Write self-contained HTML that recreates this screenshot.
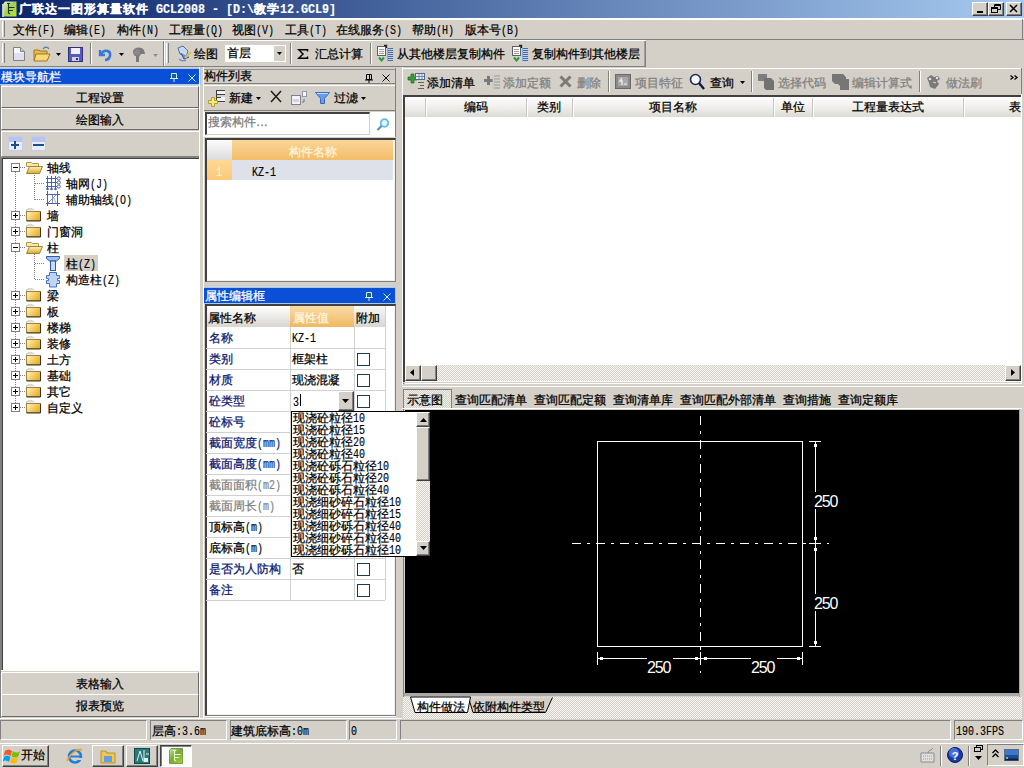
<!DOCTYPE html>
<html><head><meta charset="utf-8">
<style>
*{box-sizing:border-box;margin:0;padding:0}
html,body{width:1024px;height:768px;overflow:hidden;background:#D4D0C8;font-family:"Liberation Sans",sans-serif;font-size:12px;color:#000;position:relative}
.a{position:absolute}
.t{position:absolute;white-space:nowrap;font-size:12px;line-height:14px;height:14px;-webkit-text-stroke:0.25px currentColor}
.mw{display:inline-block;overflow:visible;white-space:nowrap}
.m{display:inline-block;font-family:"Liberation Mono",monospace;transform-origin:0 0;-webkit-text-stroke:0.15px currentColor;letter-spacing:0}
.rz{border-top:1px solid #fff;border-left:1px solid #fff;border-right:1px solid #808080;border-bottom:1px solid #808080}
.rz2{border-top:1px solid #fff;border-left:1px solid #fff;border-right:1px solid #404040;border-bottom:1px solid #404040;box-shadow:inset -1px -1px 0 #808080}
.sk{border-top:1px solid #808080;border-left:1px solid #808080;border-right:1px solid #fff;border-bottom:1px solid #fff}
.vsep{position:absolute;width:2px;border-left:1px solid #808080;border-right:1px solid #fff}
.hsep{position:absolute;height:2px;border-top:1px solid #808080;border-bottom:1px solid #fff}
.grip{position:absolute;width:3px;border-left:1px solid #fff;border-right:1px solid #808080}
.dots{background-color:#D4D0C8;background-image:repeating-conic-gradient(#D4D0C8 0 25%,#F4F3F0 0 50%);background-size:2px 2px}
.g{color:#808080}
.nv{color:#0A246A}
.wh{color:#fff}
svg{position:absolute;overflow:visible}
</style></head><body>

<div class="a" style="left:0px;top:0px;width:1024px;height:18px;background:linear-gradient(to right,#0A246A 0%,#A6CAF0 100%)"></div>
<svg style="left:2px;top:1px" width="16" height="16" viewBox="0 0 16 16"><defs><linearGradient id="gi" x1="0" y1="0" x2="1" y2="1"><stop offset="0" stop-color="#E0F4C0"/><stop offset="0.45" stop-color="#A8CC60"/><stop offset="1" stop-color="#B0E828"/></linearGradient></defs><path d="M3 0.5h11.5v15h-13v-13z" fill="url(#gi)"/><path d="M1 3v13" stroke="#F0FFE0" stroke-width="1.5"/><path d="M5 2.5h3M6.5 2.5v9M6.5 6.5h6M7 9.5h4M6 11.5l2 1.5" stroke="#1E3A0A" stroke-width="1.1" fill="none"/></svg>
<div class="t" style="left:19px;top:2px;color:#fff;font-weight:bold;letter-spacing:1px;">广联达一图形算量软件</div>
<div class="t" style="left:156px;top:2px;color:#fff;font-weight:bold;"><span class="mw" style="width:98px"><span class="m" style="font-size:12.5px;transform:scaleX(0.9333)">GCL2008&nbsp;-&nbsp;[D:\</span></span></div>
<div class="t" style="left:254px;top:2px;color:#fff;font-weight:bold;letter-spacing:1px;">教学</div>
<div class="t" style="left:280px;top:2px;color:#fff;font-weight:bold;"><span class="mw" style="width:56px"><span class="m" style="font-size:12.5px;transform:scaleX(0.9333)">12.GCL9]</span></span></div>
<div class="a rz2" style="left:972px;top:2px;width:16px;height:14px;background:#D4D0C8"></div>
<div class="a rz2" style="left:988px;top:2px;width:16px;height:14px;background:#D4D0C8"></div>
<div class="a rz2" style="left:1006px;top:2px;width:16px;height:14px;background:#D4D0C8"></div>
<svg style="left:976px;top:5px" width="10" height="9" viewBox="0 0 10 9"><rect x="1" y="6" width="6" height="2" fill="#000"/></svg>
<svg style="left:991px;top:4px" width="10" height="9" viewBox="0 0 10 9"><path d="M3.5 0.5h6v5h-6z M3 1.5h6" stroke="#000" fill="none"/><rect x="0.5" y="3.5" width="6" height="5" fill="#D4D0C8" stroke="#000"/><path d="M1 4.5h5" stroke="#000"/></svg>
<svg style="left:1009px;top:4px" width="10" height="9" viewBox="0 0 10 9"><path d="M1 1L8 8M8 1L1 8" stroke="#000" stroke-width="1.5"/></svg>
<div class="a" style="left:0px;top:18px;width:1024px;height:1px;background:#fff"></div>
<div class="a" style="left:0px;top:19px;width:1024px;height:1px;background:#fff"></div>
<div class="grip" style="left:2px;top:21px;height:16px"></div>
<div class="a" style="left:0px;top:39px;width:1024px;height:1px;background:#808080"></div>
<div class="a" style="left:1022px;top:19px;width:1px;height:20px;background:#808080"></div>
<div class="t" style="left:13px;top:23px;">文件<span class="mw" style="width:18px"><span class="m" style="font-size:12.5px;transform:scaleX(0.8000)">(F)</span></span></div>
<div class="t" style="left:64px;top:23px;">编辑<span class="mw" style="width:18px"><span class="m" style="font-size:12.5px;transform:scaleX(0.8000)">(E)</span></span></div>
<div class="t" style="left:117px;top:23px;">构件<span class="mw" style="width:18px"><span class="m" style="font-size:12.5px;transform:scaleX(0.8000)">(N)</span></span></div>
<div class="t" style="left:169px;top:23px;">工程量<span class="mw" style="width:18px"><span class="m" style="font-size:12.5px;transform:scaleX(0.8000)">(Q)</span></span></div>
<div class="t" style="left:232px;top:23px;">视图<span class="mw" style="width:18px"><span class="m" style="font-size:12.5px;transform:scaleX(0.8000)">(V)</span></span></div>
<div class="t" style="left:285px;top:23px;">工具<span class="mw" style="width:18px"><span class="m" style="font-size:12.5px;transform:scaleX(0.8000)">(T)</span></span></div>
<div class="t" style="left:336px;top:23px;">在线服务<span class="mw" style="width:18px"><span class="m" style="font-size:12.5px;transform:scaleX(0.8000)">(S)</span></span></div>
<div class="t" style="left:412px;top:23px;">帮助<span class="mw" style="width:18px"><span class="m" style="font-size:12.5px;transform:scaleX(0.8000)">(H)</span></span></div>
<div class="t" style="left:465px;top:23px;">版本号<span class="mw" style="width:18px"><span class="m" style="font-size:12.5px;transform:scaleX(0.8000)">(B)</span></span></div>
<div class="a" style="left:0px;top:40px;width:646px;height:1px;background:#fff"></div>
<div class="a" style="left:0px;top:66px;width:646px;height:1px;background:#808080"></div>
<div class="grip" style="left:2px;top:43px;height:20px"></div>
<div class="a" style="left:163px;top:41px;width:1px;height:25px;background:#808080"></div>
<svg style="left:13px;top:47px" width="12" height="14" viewBox="0 0 12 14"><path d="M0.5 0.5h7l4 4v9h-11z" fill="#F8F8FF" stroke="#808080"/><path d="M7.5 0.5v4h4" fill="#C8C8D8" stroke="#808080"/><rect x="1" y="6" width="10" height="7" fill="#E0E0F0"/></svg>
<svg style="left:33px;top:46px" width="18" height="16" viewBox="0 0 18 16"><path d="M1 4h5l1 1h7v9H1z" fill="#E8B84C" stroke="#A07820"/><path d="M3 8h14l-3 7H1z" fill="#F8D878" stroke="#A07820"/><path d="M10 3c2-3 5-2 6 0" stroke="#5080B0" fill="none" stroke-width="1.3"/></svg>
<svg style="left:56px;top:53px" width="5" height="3" viewBox="0 0 5 3"><path d="M0 0h5l-2.5 3z" fill="#000"/></svg>
<svg style="left:68px;top:47px" width="16" height="15" viewBox="0 0 16 15"><rect x="0.5" y="0.5" width="14" height="14" fill="#5A5AB4" stroke="#303080"/><rect x="3" y="1" width="9" height="6" fill="#F0F0F8"/><rect x="4" y="10" width="7" height="4" fill="#D0D0E0"/><rect x="8" y="11" width="2" height="2" fill="#303080"/></svg>
<div class="vsep" style="left:90px;top:43px;height:21px"></div>
<svg style="left:97px;top:47px" width="15" height="14" viewBox="0 0 15 14"><path d="M3 3v5h5" stroke="#3A78D8" stroke-width="2.4" fill="none"/><path d="M4 7c3-5 10-4 9 2c-1 3-3 4-5 4" stroke="#3A78D8" stroke-width="2.6" fill="none"/></svg>
<svg style="left:119px;top:53px" width="5" height="3" viewBox="0 0 5 3"><path d="M0 0h5l-2.5 3z" fill="#000"/></svg>
<svg style="left:131px;top:46px" width="16" height="16" viewBox="0 0 16 16"><path d="M2 5c1-4 8-5 11-1l1 4h-4l-2 3v5h-3v-6c-2 0-3-2-3-5z" fill="#7A7A7A"/><circle cx="6" cy="6" r="3" fill="#8A8A8A"/></svg>
<svg style="left:153px;top:54px" width="5" height="3" viewBox="0 0 5 3"><path d="M0 0h5l-2.5 3z" fill="#909090"/></svg>
<div class="a" style="left:164px;top:41px;width:1px;height:25px;background:#fff"></div>
<div class="grip" style="left:166px;top:43px;height:20px"></div>
<svg style="left:175px;top:45px" width="17" height="17" viewBox="0 0 17 17"><path d="M3 3l5-2 5 5-2 6-6-3z" fill="#C8D8F0" stroke="#5070B0"/><path d="M6 8l3 6 5-2" fill="#6C8CD0" stroke="#3050A0"/><path d="M10 13l6-6" stroke="#E0C040" stroke-width="2"/><path d="M4 14c2 2 5 2 7 1" stroke="#7090D0" fill="none" stroke-width="1.5"/></svg>
<div class="t" style="left:194px;top:47px;">绘图</div>
<div class="a" style="left:225px;top:45px;width:61px;height:17px;background:#fff"></div>
<div class="t" style="left:227px;top:46px;">首层</div>
<div class="a " style="left:274px;top:46px;width:11px;height:15px;background:#D4D0C8"></div>
<svg style="left:277px;top:52px" width="5" height="3" viewBox="0 0 5 3"><path d="M0 0h5l-2.5 3z" fill="#000"/></svg>
<div class="vsep" style="left:290px;top:43px;height:21px"></div>
<svg style="left:298px;top:49px" width="10" height="10" viewBox="0 0 10 10"><path d="M9.5 2.5V0.8H0.8L5 5 0.8 9.2H9.5V7.5" fill="none" stroke="#000" stroke-width="1.5"/></svg>
<div class="t" style="left:315px;top:47px;">汇总计算</div>
<div class="vsep" style="left:370px;top:43px;height:21px"></div>
<svg style="left:376px;top:45px" width="18" height="17" viewBox="0 0 18 17"><rect x="1.5" y="1.5" width="8" height="9" fill="#FAFAFA" stroke="#606060"/><path d="M3 4.5h5M3 6.5h5M3 8.5h5" stroke="#A0A0A0"/><path d="M8 0.5h2.5v2.5" stroke="#202020" stroke-width="1.4" fill="none"/><path d="M11.5 3v13" stroke="#80A8E8"/><path d="M12 3.5h5M12 5.5h5M12 7.5h5M12 9.5h5M12 11.5h5M12 13.5h5M12 15.5h5" stroke="#3A6AC0"/><path d="M3 12.5l2.5 3 2.5-3" stroke="#2A9A3A" stroke-width="2" fill="none"/></svg>
<div class="t" style="left:397px;top:47px;">从其他楼层复制构件</div>
<svg style="left:511px;top:45px" width="18" height="17" viewBox="0 0 18 17"><rect x="1.5" y="1.5" width="8" height="9" fill="#FAFAFA" stroke="#606060"/><path d="M3 4.5h5M3 6.5h5M3 8.5h5" stroke="#A0A0A0"/><path d="M8 0.5h2.5v2.5" stroke="#202020" stroke-width="1.4" fill="none"/><path d="M11.5 3v13" stroke="#80A8E8"/><path d="M12 3.5h5M12 5.5h5M12 7.5h5M12 9.5h5M12 11.5h5M12 13.5h5M12 15.5h5" stroke="#3A6AC0"/><path d="M3 12.5l2.5 3 2.5-3" stroke="#2A9A3A" stroke-width="2" fill="none"/></svg>
<div class="t" style="left:532px;top:47px;">复制构件到其他楼层</div>
<div class="a" style="left:645px;top:41px;width:1px;height:25px;background:#808080"></div>
<div class="a" style="left:644px;top:41px;width:1px;height:25px;background:#A0A0A0"></div>
<div class="a" style="left:0px;top:68px;width:201px;height:17px;background:#A6CAF0"></div>
<div class="a" style="left:0px;top:69px;width:200px;height:15px;background:#0A50D6"></div>
<div class="t" style="left:1px;top:70px;color:#fff;">模块导航栏</div>
<svg style="left:170px;top:73px" width="8" height="9" viewBox="0 0 8 9"><path d="M1.5 0.5h5v5h-5z" fill="#2A5A7A" stroke="#C8F4FF"/><path d="M0 5.5h8M4 6v3" stroke="#C8F4FF"/></svg>
<svg style="left:188px;top:74px" width="8" height="8" viewBox="0 0 8 8"><path d="M0.5 0.5L7.5 7.5M7.5 0.5L0.5 7.5" stroke="#C8F4FF"/></svg>
<div class="a" style="left:199px;top:67px;width:1px;height:651px;background:#fff"></div>
<div class="a" style="left:0px;top:85px;width:1px;height:633px;background:#808080"></div>
<div class="a rz" style="left:1px;top:86px;width:198px;height:22px;background:#D4D0C8;border-bottom-color:#6A6A6A;border-right-color:#6A6A6A"></div>
<div class="t" style="left:76px;top:91px;">工程设置</div>
<div class="a rz" style="left:1px;top:108px;width:198px;height:22px;background:#D4D0C8;border-bottom-color:#6A6A6A;border-right-color:#6A6A6A"></div>
<div class="t" style="left:76px;top:113px;">绘图输入</div>
<div class="a " style="left:1px;top:131px;width:198px;height:26px;background:#D4D0C8;border-top:1px solid #fff;border-left:1px solid #fff;border-bottom:1px solid #808080"></div>
<svg style="left:8px;top:136px" width="15" height="15" viewBox="0 0 15 15"><rect x="0.5" y="0.5" width="14" height="14" fill="#E8ECF6" stroke="#C0CCE8"/><rect x="1" y="1" width="13" height="5" fill="#B8C4EE"/><path d="M3 9h8M7 5v8" stroke="#1A4F88" stroke-width="2"/></svg>
<svg style="left:31px;top:136px" width="15" height="15" viewBox="0 0 15 15"><rect x="0.5" y="0.5" width="14" height="14" fill="#E8ECF6" stroke="#C0CCE8"/><rect x="1" y="1" width="13" height="5" fill="#B8C4EE"/><path d="M2 9h11" stroke="#1A4F88" stroke-width="2"/></svg>
<div class="a" style="left:1px;top:157px;width:198px;height:514px;background:#fff;border-left:1px solid #808080;border-top:1px solid #808080;box-shadow:inset 1px 1px 0 #404040"></div>
<div class="a" style="left:1px;top:670px;width:198px;height:2px;background:#D4D0C8;border-top:1px solid #fff"></div>
<div class="a" style="left:15px;top:172px;width:1px;height:232px;background-image:linear-gradient(#808080 50%,transparent 50%);background-size:1px 2px"></div>
<div class="a" style="left:34px;top:173px;width:1px;height:27px;background-image:linear-gradient(#808080 50%,transparent 50%);background-size:1px 2px"></div>
<div class="a" style="left:34px;top:254px;width:1px;height:26px;background-image:linear-gradient(#808080 50%,transparent 50%);background-size:1px 2px"></div>
<svg style="left:11px;top:163px" width="9" height="9" viewBox="0 0 9 9"><rect x="0.5" y="0.5" width="8" height="8" fill="#fff" stroke="#808080"/><path d="M2 4.5h5" stroke="#000"/></svg>
<div class="a" style="left:20px;top:167px;width:6px;height:1px;background-image:linear-gradient(to right,#808080 50%,transparent 50%);background-size:2px 1px"></div>
<svg style="left:26px;top:161px" width="17" height="13" viewBox="0 0 17 13"><defs><linearGradient id="fo" x1="0" y1="0" x2="0" y2="1"><stop offset="0" stop-color="#FFF4C0"/><stop offset="1" stop-color="#D8A830"/></linearGradient></defs><path d="M0.5 1.5h5l1 1h6v3h-12z" fill="#F8E8B0" stroke="#B89848"/><path d="M3.5 5.5h13l-3 7h-13z" fill="url(#fo)" stroke="#A88028"/></svg>
<div class="t" style="left:47px;top:161px;">轴线</div>
<div class="a" style="left:35px;top:183px;width:10px;height:1px;background-image:linear-gradient(to right,#808080 50%,transparent 50%);background-size:2px 1px"></div>
<svg style="left:46px;top:176px" width="15" height="15" viewBox="0 0 15 15"><path d="M1.5 0v12M5.5 0v12M9.5 0v12M0 2.5h11M0 6.5h11M0 10.5h11" stroke="#4A62A8"/><circle cx="12.8" cy="2.5" r="1.6" fill="#fff" stroke="#4A62A8"/><circle cx="12.8" cy="6.5" r="1.6" fill="#fff" stroke="#4A62A8"/><circle cx="12.8" cy="10.5" r="1.6" fill="#fff" stroke="#4A62A8"/><circle cx="1.5" cy="13" r="1.3" fill="#4A62A8"/><circle cx="5.5" cy="13" r="1.3" fill="#4A62A8"/><circle cx="9.5" cy="13" r="1.3" fill="#4A62A8"/></svg>
<div class="t" style="left:66px;top:177px;">轴网<span class="mw" style="width:18px"><span class="m" style="font-size:12.5px;transform:scaleX(0.8000)">(J)</span></span></div>
<div class="a" style="left:35px;top:199px;width:10px;height:1px;background-image:linear-gradient(to right,#808080 50%,transparent 50%);background-size:2px 1px"></div>
<svg style="left:46px;top:191px" width="14" height="15" viewBox="0 0 14 15"><path d="M1.5 0v15M11.5 0v15M0 3.5h14M0 12.5h14" stroke="#4A62A8"/><path d="M2 12L10 4M6.5 4v8" stroke="#7A8EC0"/><path d="M8 7l2 5" stroke="#A0B0D8"/></svg>
<div class="t" style="left:66px;top:193px;">辅助轴线<span class="mw" style="width:18px"><span class="m" style="font-size:12.5px;transform:scaleX(0.8000)">(O)</span></span></div>
<svg style="left:11px;top:211px" width="9" height="9" viewBox="0 0 9 9"><rect x="0.5" y="0.5" width="8" height="8" fill="#fff" stroke="#808080"/><path d="M2 4.5h5" stroke="#000"/><path d="M4.5 2v5" stroke="#000"/></svg>
<div class="a" style="left:20px;top:215px;width:6px;height:1px;background-image:linear-gradient(to right,#808080 50%,transparent 50%);background-size:2px 1px"></div>
<svg style="left:26px;top:209px" width="16" height="13" viewBox="0 0 16 13"><defs><linearGradient id="fc" x1="0" y1="0" x2="1" y2="0.6"><stop offset="0" stop-color="#FFF4C8"/><stop offset="0.6" stop-color="#F4CC60"/><stop offset="1" stop-color="#E8B030"/></linearGradient></defs><path d="M0.5 2.5v-1.5l1-1h5l1.5 1.5" fill="none" stroke="#B8B0A0"/><rect x="0.5" y="2.5" width="14" height="9" fill="url(#fc)" stroke="#A08040"/><path d="M14.5 3v9h-14" fill="none" stroke="#403010"/></svg>
<div class="t" style="left:47px;top:209px;">墙</div>
<svg style="left:11px;top:227px" width="9" height="9" viewBox="0 0 9 9"><rect x="0.5" y="0.5" width="8" height="8" fill="#fff" stroke="#808080"/><path d="M2 4.5h5" stroke="#000"/><path d="M4.5 2v5" stroke="#000"/></svg>
<div class="a" style="left:20px;top:231px;width:6px;height:1px;background-image:linear-gradient(to right,#808080 50%,transparent 50%);background-size:2px 1px"></div>
<svg style="left:26px;top:225px" width="16" height="13" viewBox="0 0 16 13"><defs><linearGradient id="fc" x1="0" y1="0" x2="1" y2="0.6"><stop offset="0" stop-color="#FFF4C8"/><stop offset="0.6" stop-color="#F4CC60"/><stop offset="1" stop-color="#E8B030"/></linearGradient></defs><path d="M0.5 2.5v-1.5l1-1h5l1.5 1.5" fill="none" stroke="#B8B0A0"/><rect x="0.5" y="2.5" width="14" height="9" fill="url(#fc)" stroke="#A08040"/><path d="M14.5 3v9h-14" fill="none" stroke="#403010"/></svg>
<div class="t" style="left:47px;top:225px;">门窗洞</div>
<svg style="left:11px;top:243px" width="9" height="9" viewBox="0 0 9 9"><rect x="0.5" y="0.5" width="8" height="8" fill="#fff" stroke="#808080"/><path d="M2 4.5h5" stroke="#000"/></svg>
<div class="a" style="left:20px;top:247px;width:6px;height:1px;background-image:linear-gradient(to right,#808080 50%,transparent 50%);background-size:2px 1px"></div>
<svg style="left:26px;top:241px" width="17" height="13" viewBox="0 0 17 13"><defs><linearGradient id="fo" x1="0" y1="0" x2="0" y2="1"><stop offset="0" stop-color="#FFF4C0"/><stop offset="1" stop-color="#D8A830"/></linearGradient></defs><path d="M0.5 1.5h5l1 1h6v3h-12z" fill="#F8E8B0" stroke="#B89848"/><path d="M3.5 5.5h13l-3 7h-13z" fill="url(#fo)" stroke="#A88028"/></svg>
<div class="t" style="left:47px;top:241px;">柱</div>
<div class="a" style="left:35px;top:263px;width:10px;height:1px;background-image:linear-gradient(to right,#808080 50%,transparent 50%);background-size:2px 1px"></div>
<div class="a" style="left:64px;top:255px;width:34px;height:16px;background:#D4D0C8"></div>
<svg style="left:46px;top:256px" width="14" height="15" viewBox="0 0 14 15"><path d="M0.5 0.5h13v2l-3 2.5h-7l-3-2.5z" fill="#A0C0F0" stroke="#3058A8"/><rect x="4.5" y="5" width="5" height="9.5" fill="#C8DCF8" stroke="#3058A8"/></svg>
<div class="t" style="left:66px;top:257px;">柱<span class="mw" style="width:18px"><span class="m" style="font-size:12.5px;transform:scaleX(0.8000)">(Z)</span></span></div>
<div class="a" style="left:35px;top:279px;width:10px;height:1px;background-image:linear-gradient(to right,#808080 50%,transparent 50%);background-size:2px 1px"></div>
<svg style="left:46px;top:272px" width="14" height="15" viewBox="0 0 14 15"><path d="M3.5 0.5h7v3h3v3h-2v2h2v3h-3v3.5h-7v-3.5h-3v-3h2v-2h-2v-3h3z" fill="#C0D4F4" stroke="#4870C0"/></svg>
<div class="t" style="left:66px;top:273px;">构造柱<span class="mw" style="width:18px"><span class="m" style="font-size:12.5px;transform:scaleX(0.8000)">(Z)</span></span></div>
<svg style="left:11px;top:291px" width="9" height="9" viewBox="0 0 9 9"><rect x="0.5" y="0.5" width="8" height="8" fill="#fff" stroke="#808080"/><path d="M2 4.5h5" stroke="#000"/><path d="M4.5 2v5" stroke="#000"/></svg>
<div class="a" style="left:20px;top:295px;width:6px;height:1px;background-image:linear-gradient(to right,#808080 50%,transparent 50%);background-size:2px 1px"></div>
<svg style="left:26px;top:289px" width="16" height="13" viewBox="0 0 16 13"><defs><linearGradient id="fc" x1="0" y1="0" x2="1" y2="0.6"><stop offset="0" stop-color="#FFF4C8"/><stop offset="0.6" stop-color="#F4CC60"/><stop offset="1" stop-color="#E8B030"/></linearGradient></defs><path d="M0.5 2.5v-1.5l1-1h5l1.5 1.5" fill="none" stroke="#B8B0A0"/><rect x="0.5" y="2.5" width="14" height="9" fill="url(#fc)" stroke="#A08040"/><path d="M14.5 3v9h-14" fill="none" stroke="#403010"/></svg>
<div class="t" style="left:47px;top:289px;">梁</div>
<svg style="left:11px;top:307px" width="9" height="9" viewBox="0 0 9 9"><rect x="0.5" y="0.5" width="8" height="8" fill="#fff" stroke="#808080"/><path d="M2 4.5h5" stroke="#000"/><path d="M4.5 2v5" stroke="#000"/></svg>
<div class="a" style="left:20px;top:311px;width:6px;height:1px;background-image:linear-gradient(to right,#808080 50%,transparent 50%);background-size:2px 1px"></div>
<svg style="left:26px;top:305px" width="16" height="13" viewBox="0 0 16 13"><defs><linearGradient id="fc" x1="0" y1="0" x2="1" y2="0.6"><stop offset="0" stop-color="#FFF4C8"/><stop offset="0.6" stop-color="#F4CC60"/><stop offset="1" stop-color="#E8B030"/></linearGradient></defs><path d="M0.5 2.5v-1.5l1-1h5l1.5 1.5" fill="none" stroke="#B8B0A0"/><rect x="0.5" y="2.5" width="14" height="9" fill="url(#fc)" stroke="#A08040"/><path d="M14.5 3v9h-14" fill="none" stroke="#403010"/></svg>
<div class="t" style="left:47px;top:305px;">板</div>
<svg style="left:11px;top:323px" width="9" height="9" viewBox="0 0 9 9"><rect x="0.5" y="0.5" width="8" height="8" fill="#fff" stroke="#808080"/><path d="M2 4.5h5" stroke="#000"/><path d="M4.5 2v5" stroke="#000"/></svg>
<div class="a" style="left:20px;top:327px;width:6px;height:1px;background-image:linear-gradient(to right,#808080 50%,transparent 50%);background-size:2px 1px"></div>
<svg style="left:26px;top:321px" width="16" height="13" viewBox="0 0 16 13"><defs><linearGradient id="fc" x1="0" y1="0" x2="1" y2="0.6"><stop offset="0" stop-color="#FFF4C8"/><stop offset="0.6" stop-color="#F4CC60"/><stop offset="1" stop-color="#E8B030"/></linearGradient></defs><path d="M0.5 2.5v-1.5l1-1h5l1.5 1.5" fill="none" stroke="#B8B0A0"/><rect x="0.5" y="2.5" width="14" height="9" fill="url(#fc)" stroke="#A08040"/><path d="M14.5 3v9h-14" fill="none" stroke="#403010"/></svg>
<div class="t" style="left:47px;top:321px;">楼梯</div>
<svg style="left:11px;top:339px" width="9" height="9" viewBox="0 0 9 9"><rect x="0.5" y="0.5" width="8" height="8" fill="#fff" stroke="#808080"/><path d="M2 4.5h5" stroke="#000"/><path d="M4.5 2v5" stroke="#000"/></svg>
<div class="a" style="left:20px;top:343px;width:6px;height:1px;background-image:linear-gradient(to right,#808080 50%,transparent 50%);background-size:2px 1px"></div>
<svg style="left:26px;top:337px" width="16" height="13" viewBox="0 0 16 13"><defs><linearGradient id="fc" x1="0" y1="0" x2="1" y2="0.6"><stop offset="0" stop-color="#FFF4C8"/><stop offset="0.6" stop-color="#F4CC60"/><stop offset="1" stop-color="#E8B030"/></linearGradient></defs><path d="M0.5 2.5v-1.5l1-1h5l1.5 1.5" fill="none" stroke="#B8B0A0"/><rect x="0.5" y="2.5" width="14" height="9" fill="url(#fc)" stroke="#A08040"/><path d="M14.5 3v9h-14" fill="none" stroke="#403010"/></svg>
<div class="t" style="left:47px;top:337px;">装修</div>
<svg style="left:11px;top:355px" width="9" height="9" viewBox="0 0 9 9"><rect x="0.5" y="0.5" width="8" height="8" fill="#fff" stroke="#808080"/><path d="M2 4.5h5" stroke="#000"/><path d="M4.5 2v5" stroke="#000"/></svg>
<div class="a" style="left:20px;top:359px;width:6px;height:1px;background-image:linear-gradient(to right,#808080 50%,transparent 50%);background-size:2px 1px"></div>
<svg style="left:26px;top:353px" width="16" height="13" viewBox="0 0 16 13"><defs><linearGradient id="fc" x1="0" y1="0" x2="1" y2="0.6"><stop offset="0" stop-color="#FFF4C8"/><stop offset="0.6" stop-color="#F4CC60"/><stop offset="1" stop-color="#E8B030"/></linearGradient></defs><path d="M0.5 2.5v-1.5l1-1h5l1.5 1.5" fill="none" stroke="#B8B0A0"/><rect x="0.5" y="2.5" width="14" height="9" fill="url(#fc)" stroke="#A08040"/><path d="M14.5 3v9h-14" fill="none" stroke="#403010"/></svg>
<div class="t" style="left:47px;top:353px;">土方</div>
<svg style="left:11px;top:371px" width="9" height="9" viewBox="0 0 9 9"><rect x="0.5" y="0.5" width="8" height="8" fill="#fff" stroke="#808080"/><path d="M2 4.5h5" stroke="#000"/><path d="M4.5 2v5" stroke="#000"/></svg>
<div class="a" style="left:20px;top:375px;width:6px;height:1px;background-image:linear-gradient(to right,#808080 50%,transparent 50%);background-size:2px 1px"></div>
<svg style="left:26px;top:369px" width="16" height="13" viewBox="0 0 16 13"><defs><linearGradient id="fc" x1="0" y1="0" x2="1" y2="0.6"><stop offset="0" stop-color="#FFF4C8"/><stop offset="0.6" stop-color="#F4CC60"/><stop offset="1" stop-color="#E8B030"/></linearGradient></defs><path d="M0.5 2.5v-1.5l1-1h5l1.5 1.5" fill="none" stroke="#B8B0A0"/><rect x="0.5" y="2.5" width="14" height="9" fill="url(#fc)" stroke="#A08040"/><path d="M14.5 3v9h-14" fill="none" stroke="#403010"/></svg>
<div class="t" style="left:47px;top:369px;">基础</div>
<svg style="left:11px;top:387px" width="9" height="9" viewBox="0 0 9 9"><rect x="0.5" y="0.5" width="8" height="8" fill="#fff" stroke="#808080"/><path d="M2 4.5h5" stroke="#000"/><path d="M4.5 2v5" stroke="#000"/></svg>
<div class="a" style="left:20px;top:391px;width:6px;height:1px;background-image:linear-gradient(to right,#808080 50%,transparent 50%);background-size:2px 1px"></div>
<svg style="left:26px;top:385px" width="16" height="13" viewBox="0 0 16 13"><defs><linearGradient id="fc" x1="0" y1="0" x2="1" y2="0.6"><stop offset="0" stop-color="#FFF4C8"/><stop offset="0.6" stop-color="#F4CC60"/><stop offset="1" stop-color="#E8B030"/></linearGradient></defs><path d="M0.5 2.5v-1.5l1-1h5l1.5 1.5" fill="none" stroke="#B8B0A0"/><rect x="0.5" y="2.5" width="14" height="9" fill="url(#fc)" stroke="#A08040"/><path d="M14.5 3v9h-14" fill="none" stroke="#403010"/></svg>
<div class="t" style="left:47px;top:385px;">其它</div>
<svg style="left:11px;top:403px" width="9" height="9" viewBox="0 0 9 9"><rect x="0.5" y="0.5" width="8" height="8" fill="#fff" stroke="#808080"/><path d="M2 4.5h5" stroke="#000"/><path d="M4.5 2v5" stroke="#000"/></svg>
<div class="a" style="left:20px;top:407px;width:6px;height:1px;background-image:linear-gradient(to right,#808080 50%,transparent 50%);background-size:2px 1px"></div>
<svg style="left:26px;top:401px" width="16" height="13" viewBox="0 0 16 13"><defs><linearGradient id="fc" x1="0" y1="0" x2="1" y2="0.6"><stop offset="0" stop-color="#FFF4C8"/><stop offset="0.6" stop-color="#F4CC60"/><stop offset="1" stop-color="#E8B030"/></linearGradient></defs><path d="M0.5 2.5v-1.5l1-1h5l1.5 1.5" fill="none" stroke="#B8B0A0"/><rect x="0.5" y="2.5" width="14" height="9" fill="url(#fc)" stroke="#A08040"/><path d="M14.5 3v9h-14" fill="none" stroke="#403010"/></svg>
<div class="t" style="left:47px;top:401px;">自定义</div>
<div class="a rz" style="left:1px;top:672px;width:198px;height:23px;background:#D4D0C8;border-bottom-color:#6A6A6A;border-right-color:#6A6A6A"></div>
<div class="t" style="left:76px;top:677px;">表格输入</div>
<div class="a rz" style="left:1px;top:694px;width:198px;height:23px;background:#D4D0C8;border-bottom-color:#6A6A6A;border-right-color:#6A6A6A"></div>
<div class="t" style="left:76px;top:699px;">报表预览</div>
<div class="a" style="left:203px;top:67px;width:1px;height:651px;background:#fff"></div>
<div class="a " style="left:204px;top:69px;width:192px;height:15px;background:#D4D0C8;border-top:1px solid #909090;border-bottom:1px solid #808080;border-right:1px solid #808080"></div>
<div class="t" style="left:204px;top:69px;">构件列表</div>
<svg style="left:365px;top:74px" width="8" height="9" viewBox="0 0 8 9"><path d="M1.5 0.5h5v5h-5z" fill="none" stroke="#000"/><path d="M4.5 0.5v5" stroke="#000"/><path d="M0 6h8M4 6v3" stroke="#000"/></svg>
<svg style="left:382px;top:74px" width="8" height="8" viewBox="0 0 8 8"><path d="M0.5 0.5L7.5 7.5M7.5 0.5L0.5 7.5" stroke="#000"/></svg>
<div class="a " style="left:204px;top:85px;width:192px;height:26px;background:#D4D0C8;border-top:1px solid #fff;border-bottom:1px solid #808080"></div>
<svg style="left:208px;top:89px" width="18" height="17" viewBox="0 0 18 17"><rect x="9" y="1" width="8" height="4" fill="#EEF2FC"/><rect x="9" y="8" width="8" height="4" fill="#EEF2FC"/><path d="M8.5 1v12M8 1.5h9M8 5.5h9M8 8.5h5M8 12.5h9" stroke="#404040" fill="none"/><path d="M3.5 8.5h3v3h3v3h-3v3h-3v-3h-3v-3h3z" fill="#F4EC70" stroke="#B0A030"/></svg>
<div class="t" style="left:229px;top:91px;">新建</div>
<svg style="left:256px;top:97px" width="5" height="3" viewBox="0 0 5 3"><path d="M0 0h5l-2.5 3z" fill="#000"/></svg>
<svg style="left:270px;top:90px" width="12" height="13" viewBox="0 0 12 13"><path d="M1 1L11 12M11 1L1 12" stroke="#202020" stroke-width="1.6"/></svg>
<svg style="left:291px;top:91px" width="16" height="14" viewBox="0 0 16 14"><rect x="0.5" y="4.5" width="9" height="9" fill="#F4F4F8" stroke="#808090"/><rect x="2" y="8" width="6" height="3" fill="#D0D4E0"/><rect x="11.5" y="0.5" width="4" height="5" fill="#F8F8FF" stroke="#9098B0"/><path d="M13 8v3h-2" stroke="#6070B0" fill="none"/></svg>
<svg style="left:315px;top:92px" width="15" height="12" viewBox="0 0 15 12"><path d="M0.5 0.5h14l-5 6v5h-4v-5z" fill="#6A9AE8" stroke="#3A6AC8"/><path d="M2 1.5h11" stroke="#C8DCF8"/></svg>
<div class="t" style="left:334px;top:91px;">过滤</div>
<svg style="left:361px;top:97px" width="5" height="3" viewBox="0 0 5 3"><path d="M0 0h5l-2.5 3z" fill="#000"/></svg>
<div class="a" style="left:204px;top:111px;width:192px;height:26px;background:#fff;border-top:1px solid #D4D0C8"></div>
<div class="a" style="left:205px;top:112px;width:165px;height:23px;background:#fff;border-top:2px solid #404040;border-left:2px solid #404040;border-right:1px solid #D4D0C8;border-bottom:1px solid #D4D0C8"></div>
<div class="t" style="left:208px;top:115px;color:#808080;">搜索构件…</div>
<svg style="left:376px;top:118px" width="14" height="13" viewBox="0 0 14 13"><circle cx="8.5" cy="5" r="3.8" fill="#E0F4FF" stroke="#68B8E8" stroke-width="1.8"/><path d="M5.5 8L1.5 12" stroke="#5890C0" stroke-width="2.2"/></svg>
<div class="a" style="left:395px;top:68px;width:1px;height:69px;background:#808080"></div>
<div class="a" style="left:205px;top:138px;width:191px;height:144px;background:#fff;border-top:2px solid #404040;border-left:2px solid #404040;border-right:1px solid #808080;border-bottom:1px solid #808080;box-shadow:inset -1px -1px 0 #F0F0F0"></div>
<div class="a" style="left:207px;top:140px;width:25px;height:20px;background:linear-gradient(#FCFCFC,#DCDCDC)"></div>
<div class="a" style="left:232px;top:140px;width:161px;height:20px;background:linear-gradient(#FAD69A,#F3BC68)"></div>
<div class="t" style="left:289px;top:145px;color:#FFF4DC;">构件名称</div>
<div class="a" style="left:207px;top:160px;width:25px;height:20px;background:linear-gradient(#FFD994,#FCC878)"></div>
<div class="t" style="left:216px;top:165px;color:#FFF0C8;"><span class="mw" style="width:6px"><span class="m" style="font-size:12.5px;transform:scaleX(0.8000)">1</span></span></div>
<div class="a" style="left:232px;top:160px;width:161px;height:20px;background:#DEE0EA"></div>
<div class="t" style="left:252px;top:165px;color:#000;"><span class="mw" style="width:24px"><span class="m" style="font-size:12.5px;transform:scaleX(0.8000)">KZ-1</span></span></div>
<div class="a" style="left:204px;top:287px;width:192px;height:17px;background:#A6CAF0"></div>
<div class="a" style="left:204px;top:288px;width:191px;height:15px;background:#0A50D6"></div>
<div class="t" style="left:205px;top:289px;color:#fff;">属性编辑框</div>
<svg style="left:365px;top:292px" width="8" height="9" viewBox="0 0 8 9"><path d="M1.5 0.5h5v5h-5z" fill="#2A5A7A" stroke="#C8F4FF"/><path d="M0 5.5h8M4 6v3" stroke="#C8F4FF"/></svg>
<svg style="left:383px;top:293px" width="8" height="8" viewBox="0 0 8 8"><path d="M0.5 0.5L7.5 7.5M7.5 0.5L0.5 7.5" stroke="#C8F4FF"/></svg>
<div class="a" style="left:205px;top:304px;width:191px;height:412px;background:#fff;border-top:2px solid #404040;border-left:2px solid #404040;border-right:1px solid #808080;border-bottom:1px solid #808080;box-shadow:inset -1px -1px 0 #F0F0F0"></div>
<div class="a" style="left:204px;top:716px;width:192px;height:2px;background:#D4D0C8;border-top:1px solid #fff"></div>
<div class="a" style="left:207px;top:306px;width:83px;height:21px;background:linear-gradient(#FFFFFF,#D8D6D0)"></div>
<div class="a" style="left:290px;top:306px;width:64px;height:21px;background:linear-gradient(#F8DCA8,#F0B860)"></div>
<div class="a" style="left:354px;top:306px;width:31px;height:21px;background:linear-gradient(#F8F8F6,#D8D6D0)"></div>
<div class="t" style="left:208px;top:311px;">属性名称</div>
<div class="t" style="left:293px;top:311px;color:#FFF6E0;">属性值</div>
<div class="t" style="left:356px;top:311px;">附加</div>
<div class="a" style="left:206px;top:348px;width:179px;height:1px;background:#D0D0D0"></div>
<div class="t" style="left:209px;top:331px;color:#0A1670;">名称</div>
<div class="t" style="left:292px;top:331px;color:#000;"><span class="mw" style="width:24px"><span class="m" style="font-size:12.5px;transform:scaleX(0.8000)">KZ-1</span></span></div>
<div class="a" style="left:206px;top:369px;width:179px;height:1px;background:#D0D0D0"></div>
<div class="t" style="left:209px;top:352px;color:#0A1670;">类别</div>
<div class="t" style="left:292px;top:352px;">框架柱</div>
<div class="a" style="left:357px;top:353px;width:13px;height:13px;background:#fff;border:1px solid #1C3A5A"></div>
<div class="a" style="left:206px;top:390px;width:179px;height:1px;background:#D0D0D0"></div>
<div class="t" style="left:209px;top:373px;color:#0A1670;">材质</div>
<div class="t" style="left:292px;top:373px;">现浇混凝</div>
<div class="a" style="left:357px;top:374px;width:13px;height:13px;background:#fff;border:1px solid #1C3A5A"></div>
<div class="a" style="left:206px;top:411px;width:179px;height:1px;background:#D0D0D0"></div>
<div class="t" style="left:209px;top:394px;color:#0A1670;">砼类型</div>
<div class="t" style="left:292px;top:394px;"><span class="mw" style="width:6px"><span class="m" style="font-size:12.5px;transform:scaleX(0.8000)">3</span></span></div>
<div class="a" style="left:357px;top:395px;width:13px;height:13px;background:#fff;border:1px solid #1C3A5A"></div>
<div class="a" style="left:206px;top:432px;width:179px;height:1px;background:#D0D0D0"></div>
<div class="t" style="left:209px;top:415px;color:#0A1670;">砼标号</div>
<div class="a" style="left:357px;top:416px;width:13px;height:13px;background:#fff;border:1px solid #1C3A5A"></div>
<div class="a" style="left:206px;top:453px;width:179px;height:1px;background:#D0D0D0"></div>
<div class="t" style="left:209px;top:436px;color:#0A1670;">截面宽度<span class="mw" style="width:24px"><span class="m" style="font-size:12.5px;transform:scaleX(0.8000)">(mm)</span></span></div>
<div class="a" style="left:357px;top:437px;width:13px;height:13px;background:#fff;border:1px solid #1C3A5A"></div>
<div class="a" style="left:206px;top:474px;width:179px;height:1px;background:#D0D0D0"></div>
<div class="t" style="left:209px;top:457px;color:#0A1670;">截面高度<span class="mw" style="width:24px"><span class="m" style="font-size:12.5px;transform:scaleX(0.8000)">(mm)</span></span></div>
<div class="a" style="left:357px;top:458px;width:13px;height:13px;background:#fff;border:1px solid #1C3A5A"></div>
<div class="a" style="left:206px;top:495px;width:179px;height:1px;background:#D0D0D0"></div>
<div class="t" style="left:209px;top:478px;color:#808080;">截面面积<span class="mw" style="width:24px"><span class="m" style="font-size:12.5px;transform:scaleX(0.8000)">(m2)</span></span></div>
<div class="a" style="left:357px;top:479px;width:13px;height:13px;background:#fff;border:1px solid #1C3A5A"></div>
<div class="a" style="left:206px;top:516px;width:179px;height:1px;background:#D0D0D0"></div>
<div class="t" style="left:209px;top:499px;color:#808080;">截面周长<span class="mw" style="width:18px"><span class="m" style="font-size:12.5px;transform:scaleX(0.8000)">(m)</span></span></div>
<div class="a" style="left:357px;top:500px;width:13px;height:13px;background:#fff;border:1px solid #1C3A5A"></div>
<div class="a" style="left:206px;top:537px;width:179px;height:1px;background:#D0D0D0"></div>
<div class="t" style="left:209px;top:520px;color:#000;">顶标高<span class="mw" style="width:18px"><span class="m" style="font-size:12.5px;transform:scaleX(0.8000)">(m)</span></span></div>
<div class="a" style="left:357px;top:521px;width:13px;height:13px;background:#fff;border:1px solid #1C3A5A"></div>
<div class="a" style="left:206px;top:558px;width:179px;height:1px;background:#D0D0D0"></div>
<div class="t" style="left:209px;top:541px;color:#000;">底标高<span class="mw" style="width:18px"><span class="m" style="font-size:12.5px;transform:scaleX(0.8000)">(m)</span></span></div>
<div class="a" style="left:357px;top:542px;width:13px;height:13px;background:#fff;border:1px solid #1C3A5A"></div>
<div class="a" style="left:206px;top:579px;width:179px;height:1px;background:#D0D0D0"></div>
<div class="t" style="left:209px;top:562px;color:#0A1670;">是否为人防构</div>
<div class="t" style="left:292px;top:562px;">否</div>
<div class="a" style="left:357px;top:563px;width:13px;height:13px;background:#fff;border:1px solid #1C3A5A"></div>
<div class="a" style="left:206px;top:600px;width:179px;height:1px;background:#D0D0D0"></div>
<div class="t" style="left:209px;top:583px;color:#0A1670;">备注</div>
<div class="a" style="left:357px;top:584px;width:13px;height:13px;background:#fff;border:1px solid #1C3A5A"></div>
<div class="a" style="left:290px;top:327px;width:1px;height:273px;background:#D0D0D0"></div>
<div class="a" style="left:354px;top:327px;width:1px;height:273px;background:#D0D0D0"></div>
<div class="a" style="left:385px;top:306px;width:1px;height:294px;background:#D0D0D0"></div>
<div class="a" style="left:291px;top:391px;width:63px;height:20px;background:#fff"></div>
<div class="a" style="left:300px;top:394px;width:1px;height:12px;background:#000"></div>
<div class="a rz2" style="left:338px;top:391px;width:16px;height:20px;background:#D4D0C8"></div>
<svg style="left:342px;top:399px" width="7" height="4" viewBox="0 0 7 4"><path d="M0 0h7l-3.5 4z" fill="#000"/></svg>
<div class="t" style="left:293px;top:395px;"><span class="mw" style="width:6px"><span class="m" style="font-size:12.5px;transform:scaleX(0.8000)">3</span></span></div>
<div class="a" style="left:402px;top:67px;width:1px;height:318px;background:#fff"></div>
<div class="a" style="left:403px;top:68px;width:619px;height:1px;background:#fff"></div>
<div class="a" style="left:1021px;top:68px;width:1px;height:26px;background:#808080"></div>
<svg style="left:407px;top:73px" width="18" height="16" viewBox="0 0 18 16"><path d="M1 4h3V1h3v3h3v3H7v3H4V7H1z" fill="#3C9A3C" stroke="#1E6A1E" stroke-width="0.7"/><rect x="8.5" y="0.5" width="9" height="6" fill="#E8F0FA" stroke="#506890"/><path d="M9 3.5h8M12 1v5M15 1v5" stroke="#7088B8"/><path d="M11 9.5h6M13 12.5h4M11 15.5h6" stroke="#606060"/></svg>
<div class="t" style="left:427px;top:76px;">添加清单</div>
<svg style="left:483px;top:74px" width="17" height="15" viewBox="0 0 17 15"><path d="M1 5h3V2h3v3h3v3H7v3H4V8H1z" fill="#7A7A7A"/><path d="M11 2h6M11 5h6M11 8h6M11 11h6M11 14h6" stroke="#9A9A9A"/><path d="M10 1v14" stroke="#C8C8C8"/></svg>
<div class="t" style="left:503px;top:76px;color:#808080;">添加定额</div>
<svg style="left:559px;top:75px" width="13" height="13" viewBox="0 0 13 13"><path d="M1.5 1.5L11.5 11.5M11.5 1.5L1.5 11.5" stroke="#7A7A7A" stroke-width="3"/></svg>
<div class="t" style="left:577px;top:76px;color:#808080;">删除</div>
<div class="vsep" style="left:608px;top:71px;height:21px"></div>
<svg style="left:615px;top:74px" width="16" height="15" viewBox="0 0 16 15"><rect x="0.5" y="0.5" width="15" height="14" fill="#8A8A8A" stroke="#6A6A6A"/><rect x="3" y="3" width="10" height="9" fill="#A8A8A8"/><path d="M7 4l-2 3h2v4" stroke="#F0F0F0" fill="none" stroke-width="1.3"/><path d="M9 10h3" stroke="#F0F0F0"/></svg>
<div class="t" style="left:635px;top:76px;color:#808080;">项目特征</div>
<svg style="left:689px;top:73px" width="16" height="17" viewBox="0 0 16 17"><circle cx="6.5" cy="6.5" r="5" fill="#F4F8FF" stroke="#202850" stroke-width="1.6"/><path d="M10 10l5 6" stroke="#101840" stroke-width="2.4"/></svg>
<div class="t" style="left:710px;top:76px;">查询</div>
<svg style="left:740px;top:81px" width="5" height="3" viewBox="0 0 5 3"><path d="M0 0h5l-2.5 3z" fill="#000"/></svg>
<div class="vsep" style="left:751px;top:71px;height:21px"></div>
<svg style="left:757px;top:74px" width="18" height="16" viewBox="0 0 18 16"><rect x="1" y="0" width="9" height="7" fill="#7E7E7E"/><path d="M7 4h7l3 3v9H9l-2-2z" fill="#727272"/></svg>
<div class="t" style="left:778px;top:76px;color:#808080;">选择代码</div>
<svg style="left:832px;top:74px" width="18" height="16" viewBox="0 0 18 16"><path d="M0 0h11l3 3v2h3v11H8v-4L6 10H3L0 7z" fill="#767676"/></svg>
<div class="t" style="left:852px;top:76px;color:#808080;">编辑计算式</div>
<div class="vsep" style="left:919px;top:71px;height:21px"></div>
<svg style="left:925px;top:73px" width="17" height="17" viewBox="0 0 17 17"><path d="M2 5l4-3 3 2 4-1 2 3-3 2 2 3-4 5-5-2-1-4z" fill="#7A7A7A"/><circle cx="5" cy="6" r="1.3" fill="#E0E0E0"/><circle cx="12" cy="5" r="1.2" fill="#E0E0E0"/><path d="M8 9l3 1" stroke="#D8D8D8"/></svg>
<div class="t" style="left:946px;top:76px;color:#808080;">做法刷</div>
<svg style="left:1010px;top:75px" width="8" height="5" viewBox="0 0 8 5"><path d="M0.5 0.5l2.5 2-2.5 2M4.5 0.5l2.5 2-2.5 2" stroke="#000" stroke-width="1.3" fill="none"/></svg>
<div class="a" style="left:403px;top:95px;width:619px;height:289px;background:#fff;border-top:2px solid #404040;border-left:2px solid #404040;border-right:1px solid #fff;border-bottom:1px solid #fff"></div>
<div class="a" style="left:405px;top:97px;width:616px;height:20px;background:linear-gradient(#FEFEFE 0%,#F0EFEC 50%,#DCDAD4 100%)"></div>
<div class="a" style="left:425px;top:98px;width:1px;height:19px;background:#C8C6C0"></div>
<div class="a" style="left:426px;top:98px;width:1px;height:19px;background:#FFF"></div>
<div class="a" style="left:526px;top:98px;width:1px;height:19px;background:#C8C6C0"></div>
<div class="a" style="left:527px;top:98px;width:1px;height:19px;background:#FFF"></div>
<div class="a" style="left:572px;top:98px;width:1px;height:19px;background:#C8C6C0"></div>
<div class="a" style="left:573px;top:98px;width:1px;height:19px;background:#FFF"></div>
<div class="a" style="left:773px;top:98px;width:1px;height:19px;background:#C8C6C0"></div>
<div class="a" style="left:774px;top:98px;width:1px;height:19px;background:#FFF"></div>
<div class="a" style="left:812px;top:98px;width:1px;height:19px;background:#C8C6C0"></div>
<div class="a" style="left:813px;top:98px;width:1px;height:19px;background:#FFF"></div>
<div class="a" style="left:963px;top:98px;width:1px;height:19px;background:#C8C6C0"></div>
<div class="a" style="left:964px;top:98px;width:1px;height:19px;background:#FFF"></div>
<div class="t" style="left:464px;top:100px;">编码</div>
<div class="t" style="left:537px;top:100px;">类别</div>
<div class="t" style="left:649px;top:100px;">项目名称</div>
<div class="t" style="left:781px;top:100px;">单位</div>
<div class="t" style="left:852px;top:100px;">工程量表达式</div>
<div class="t" style="left:1009px;top:100px;">表</div>
<div class="a" style="left:405px;top:365px;width:616px;height:16px;background:#D4D0C8;background-image:repeating-conic-gradient(#D4D0C8 0 25%,#F6F5F2 0 50%);background-size:2px 2px"></div>
<div class="a rz2" style="left:405px;top:365px;width:16px;height:16px;background:#D4D0C8"></div>
<svg style="left:410px;top:369px" width="4" height="7" viewBox="0 0 4 7"><path d="M4 0v7L0 3.5z" fill="#000"/></svg>
<div class="a rz2" style="left:421px;top:365px;width:16px;height:16px;background:#D4D0C8"></div>
<div class="a rz2" style="left:1005px;top:365px;width:16px;height:16px;background:#D4D0C8"></div>
<svg style="left:1011px;top:369px" width="4" height="7" viewBox="0 0 4 7"><path d="M0 0v7l4-3.5z" fill="#000"/></svg>
<div class="a" style="left:403px;top:382px;width:619px;height:1px;background:#D4D0C8"></div>
<div class="a" style="left:1021px;top:94px;width:1px;height:290px;background:#fff"></div>
<div class="a" style="left:402px;top:386px;width:622px;height:1px;background:#fff"></div>
<div class="a" style="left:402px;top:387px;width:620px;height:22px;background:#D4D0C8"></div>
<div class="a " style="left:403px;top:389px;width:49px;height:20px;background-color:#D4D0C8;background-image:repeating-conic-gradient(#D4D0C8 0 25%,#F0EFEA 0 50%);background-size:2px 2px;border-top:1px solid #808080;border-left:1px solid #808080;border-right:1px solid #808080;border-bottom:1px solid #fff"></div>
<div class="t" style="left:407px;top:393px;">示意图</div>
<div class="t" style="left:455px;top:393px;">查询匹配清单</div>
<div class="t" style="left:534px;top:393px;">查询匹配定额</div>
<div class="t" style="left:613px;top:393px;">查询清单库</div>
<div class="t" style="left:680px;top:393px;">查询匹配外部清单</div>
<div class="t" style="left:783px;top:393px;">查询措施</div>
<div class="t" style="left:838px;top:393px;">查询定额库</div>
<div class="a" style="left:402px;top:408px;width:620px;height:1px;background:#fff"></div>
<div class="a" style="left:403px;top:409px;width:619px;height:288px;background:#D4D0C8;border-left:1px solid #808080"></div>
<div class="a" style="left:405px;top:410px;width:614px;height:283px;background:#000"></div>
<div class="a" style="left:404px;top:693px;width:616px;height:4px;background:#A8A8A8;border-bottom:1px solid #D4D0C8"></div>
<div class="a" style="left:1019px;top:409px;width:1px;height:288px;background:#A8A8A8"></div>
<svg style="left:0px;top:0px" width="1024" height="768" viewBox="0 0 1024 768"><rect x="597.5" y="441.5" width="205" height="205" fill="none" stroke="#fff"/><path d="M700.5 416V673" stroke="#fff" stroke-dasharray="9 6 3 6"/><path d="M572 543.5H829" stroke="#fff" stroke-dasharray="9 6 3 6"/><path d="M815.5 441V647M809 441.5H821M809 543.5H821M809 646.5H821" stroke="#fff"/><rect x="814" y="444" width="3" height="3" fill="#fff"/><rect x="814" y="537" width="3" height="3" fill="#fff"/><rect x="814" y="548" width="3" height="3" fill="#fff"/><rect x="814" y="641" width="3" height="3" fill="#fff"/><path d="M597.5 658.5H803M597.5 652V665M802.5 652V665M700.5 652V665" stroke="#fff"/><rect x="600" y="657" width="3" height="3" fill="#fff"/><rect x="695" y="657" width="3" height="3" fill="#fff"/><rect x="704" y="657" width="3" height="3" fill="#fff"/><rect x="797" y="657" width="3" height="3" fill="#fff"/><rect x="811" y="492" width="30" height="17" fill="#000"/><rect x="811" y="594" width="30" height="17" fill="#000"/></svg>
<svg style="left:0px;top:0px" width="1024" height="768" viewBox="0 0 1024 768"><rect x="647" y="655" width="26" height="8" fill="#000"/><rect x="751" y="655" width="26" height="8" fill="#000"/></svg>
<div class="t" style="left:647px;top:660px;color:#fff;font-size:16px;line-height:16px;height:16px;letter-spacing:-1.1px;-webkit-text-stroke:0">250</div>
<div class="t" style="left:751px;top:660px;color:#fff;font-size:16px;line-height:16px;height:16px;letter-spacing:-1.1px;-webkit-text-stroke:0">250</div>
<div class="t" style="left:814px;top:494px;color:#fff;font-size:16px;line-height:16px;height:16px;letter-spacing:-1.1px;-webkit-text-stroke:0">250</div>
<div class="t" style="left:814px;top:596px;color:#fff;font-size:16px;line-height:16px;height:16px;letter-spacing:-1.1px;-webkit-text-stroke:0">250</div>
<div class="a" style="left:403px;top:697px;width:619px;height:22px;background:#D4D0C8;background-image:repeating-conic-gradient(#D4D0C8 0 25%,#F6F5F2 0 50%);background-size:2px 2px"></div>
<svg style="left:402px;top:696px" width="160" height="19" viewBox="0 0 160 19"><path d="M66.5 1.5L71 16.5H143.5L150.5 1.5" fill="#D4D0C8" stroke="#000"/><path d="M8.5 1L13 16.5H65.5L68.5 1z" fill="#fff" stroke="#000"/></svg>
<div class="t" style="left:417px;top:700px;">构件做法</div>
<div class="t" style="left:473px;top:700px;">依附构件类型</div>
<div class="a" style="left:0px;top:718px;width:402px;height:1px;background:#fff"></div>
<div class="a sk" style="left:0px;top:720px;width:147px;height:20px;background:#D4D0C8"></div>
<div class="a sk" style="left:150px;top:720px;width:77px;height:20px;background:#D4D0C8"></div>
<div class="a sk" style="left:230px;top:720px;width:117px;height:20px;background:#D4D0C8"></div>
<div class="a sk" style="left:349px;top:720px;width:48px;height:20px;background:#D4D0C8"></div>
<div class="a sk" style="left:400px;top:720px;width:551px;height:20px;background:#D4D0C8"></div>
<div class="a sk" style="left:954px;top:720px;width:69px;height:20px;background:#D4D0C8"></div>
<div class="t" style="left:152px;top:724px;">层高<span class="mw" style="width:30px"><span class="m" style="font-size:12.5px;transform:scaleX(0.8000)">:3.6m</span></span></div>
<div class="t" style="left:231px;top:724px;">建筑底标高<span class="mw" style="width:18px"><span class="m" style="font-size:12.5px;transform:scaleX(0.8000)">:0m</span></span></div>
<div class="t" style="left:351px;top:724px;"><span class="mw" style="width:6px"><span class="m" style="font-size:12.5px;transform:scaleX(0.8000)">0</span></span></div>
<div class="t" style="left:956px;top:724px;"><span class="mw" style="width:48px"><span class="m" style="font-size:12.5px;transform:scaleX(0.8000)">190.3FPS</span></span></div>
<div class="a" style="left:0px;top:742px;width:1024px;height:26px;background:#D4D0C8;border-top:1px solid #D4D0C8"></div>
<div class="a" style="left:0px;top:743px;width:1024px;height:1px;background:#fff"></div>
<div class="a rz2" style="left:2px;top:745px;width:47px;height:22px;background:#D4D0C8"></div>
<svg style="left:4px;top:747px" width="17" height="17" viewBox="0 0 17 17"><path d="M1 4c2-2 4-2 7 0l-1.5 5c-3-2-5-2-7 0z" fill="#F05A28"/><path d="M9 4c3 2 5 2 7 0l-1.5 5c-2 2-4 2-7 0z" fill="#7CBB00"/><path d="M0 10c2-2 4-2 6.5 0L5 15c-3-2-5-2-6.5 0z" fill="#00A1F1"/><path d="M7.5 10c3 2 5 2 7 0L13 15c-2 2-4 2-7 0z" fill="#FFBB00"/></svg>
<div class="t" style="left:21px;top:748px;color:#000;">开始</div>
<svg style="left:66px;top:748px" width="17" height="16" viewBox="0 0 17 16"><circle cx="9" cy="8.5" r="6" fill="none" stroke="#2080D8" stroke-width="2.6"/><path d="M3.5 8.5h11" stroke="#2080D8" stroke-width="2"/><path d="M1 13c4-9 12-13 15-11" stroke="#F0A020" stroke-width="1.6" fill="none"/><rect x="9" y="10" width="7" height="2" fill="#D4D0C8"/></svg>
<div class="a rz2" style="left:92px;top:745px;width:32px;height:22px;background:#D4D0C8"></div>
<svg style="left:100px;top:748px" width="16" height="16" viewBox="0 0 16 16"><path d="M1 3h5l1 2h8v10H1z" fill="#F0C850" stroke="#B89030"/><rect x="4" y="8" width="8" height="6" fill="#60A0E0"/></svg>
<div class="a rz2" style="left:126px;top:745px;width:32px;height:22px;background:#D4D0C8"></div>
<svg style="left:134px;top:748px" width="16" height="16" viewBox="0 0 16 16"><rect x="0.5" y="0.5" width="15" height="15" fill="#2A7A7A" stroke="#104848"/><path d="M3 13l3-10 3 10M10 2v12M12 6h3" stroke="#E0F0F0" fill="none"/><rect x="10" y="10" width="4" height="4" fill="#E0F0F0"/></svg>
<div class="a" style="left:160px;top:745px;width:32px;height:22px;background:#FCFCFA;border-top:1px solid #404040;border-left:1px solid #404040;border-right:1px solid #fff;border-bottom:1px solid #fff;box-shadow:inset 1px 1px 0 #808080"></div>
<svg style="left:168px;top:748px" width="16" height="16" viewBox="0 0 16 16"><defs><linearGradient id="gi2" x1="0" y1="0" x2="1" y2="1"><stop offset="0" stop-color="#C8E8A0"/><stop offset="0.45" stop-color="#78A838"/><stop offset="1" stop-color="#A0D820"/></linearGradient></defs><path d="M3 0.5h11.5v15h-13v-13z" fill="url(#gi2)" stroke="#486820" stroke-width="0.6"/><path d="M5 2.5h3M6.5 2.5v9M6.5 6.5h6M7 9.5h4M6 11.5l2 1.5" stroke="#E8F8D0" stroke-width="1.1" fill="none"/></svg>
<svg style="left:919px;top:747px" width="17" height="16" viewBox="0 0 17 16"><path d="M2 6h13v9H2z" fill="#E0E0E0" stroke="#8A8A8A"/><path d="M4 9h9M4 12h9" stroke="#9A9A9A" stroke-dasharray="1 1"/><path d="M9 6c0-3 3-2 5-5" stroke="#8A8A8A" fill="none"/></svg>
<div class="vsep" style="left:940px;top:746px;height:20px"></div>
<svg style="left:947px;top:747px" width="16" height="16" viewBox="0 0 16 16"><circle cx="8" cy="8" r="7.5" fill="#1A3AA8" stroke="#0A1A60"/><circle cx="7" cy="6" r="5" fill="#4A70D8"/><text x="8" y="12.5" font-size="11" font-weight="bold" fill="#fff" text-anchor="middle" font-family="Liberation Sans">?</text></svg>
<div class="vsep" style="left:968px;top:746px;height:20px"></div>
<svg style="left:974px;top:745px" width="9" height="16" viewBox="0 0 9 16"><rect x="2.5" y="0.5" width="6" height="4" fill="none" stroke="#000"/><rect x="0.5" y="2.5" width="6" height="4" fill="#D4D0C8" stroke="#000"/><path d="M1 11h7l-3.5 4z" fill="#000"/></svg>
<div class="a sk" style="left:987px;top:744px;width:37px;height:22px;background:#D4D0C8"></div>
<svg style="left:992px;top:749px" width="7" height="9" viewBox="0 0 7 9"><path d="M0.5 4l3-3 3 3M0.5 8l3-3 3 3" stroke="#000" stroke-width="1.3" fill="none"/></svg>
<svg style="left:1004px;top:749px" width="16" height="14" viewBox="0 0 16 14"><rect x="0.5" y="0.5" width="14" height="11" fill="#1E4C9C" stroke="#5A6A80"/><rect x="1" y="1" width="13" height="5" fill="#3A78C8"/><path d="M1 10.5h13" stroke="#102040" stroke-width="2"/><circle cx="3" cy="9" r="1" fill="#A0D0F0"/></svg>
<div class="a" style="left:291px;top:411px;width:140px;height:146px;background:#fff;border:1px solid #000"></div>
<div class="t" style="left:293px;top:412px;color:#000;line-height:13px;height:13px;">现浇砼粒径<span class="mw" style="width:12px"><span class="m" style="font-size:12.5px;transform:scaleX(0.8000)">10</span></span></div>
<div class="t" style="left:293px;top:424px;color:#000;line-height:13px;height:13px;">现浇砼粒径<span class="mw" style="width:12px"><span class="m" style="font-size:12.5px;transform:scaleX(0.8000)">15</span></span></div>
<div class="t" style="left:293px;top:436px;color:#000;line-height:13px;height:13px;">现浇砼粒径<span class="mw" style="width:12px"><span class="m" style="font-size:12.5px;transform:scaleX(0.8000)">20</span></span></div>
<div class="t" style="left:293px;top:448px;color:#000;line-height:13px;height:13px;">现浇砼粒径<span class="mw" style="width:12px"><span class="m" style="font-size:12.5px;transform:scaleX(0.8000)">40</span></span></div>
<div class="t" style="left:293px;top:460px;color:#000;line-height:13px;height:13px;">现浇砼砾石粒径<span class="mw" style="width:12px"><span class="m" style="font-size:12.5px;transform:scaleX(0.8000)">10</span></span></div>
<div class="t" style="left:293px;top:472px;color:#000;line-height:13px;height:13px;">现浇砼砾石粒径<span class="mw" style="width:12px"><span class="m" style="font-size:12.5px;transform:scaleX(0.8000)">20</span></span></div>
<div class="t" style="left:293px;top:484px;color:#000;line-height:13px;height:13px;">现浇砼砾石粒径<span class="mw" style="width:12px"><span class="m" style="font-size:12.5px;transform:scaleX(0.8000)">40</span></span></div>
<div class="t" style="left:293px;top:496px;color:#000;line-height:13px;height:13px;">现浇细砂碎石粒径<span class="mw" style="width:12px"><span class="m" style="font-size:12.5px;transform:scaleX(0.8000)">10</span></span></div>
<div class="t" style="left:293px;top:508px;color:#000;line-height:13px;height:13px;">现浇细砂碎石粒径<span class="mw" style="width:12px"><span class="m" style="font-size:12.5px;transform:scaleX(0.8000)">15</span></span></div>
<div class="t" style="left:293px;top:520px;color:#000;line-height:13px;height:13px;">现浇细砂砾石粒径<span class="mw" style="width:12px"><span class="m" style="font-size:12.5px;transform:scaleX(0.8000)">40</span></span></div>
<div class="t" style="left:293px;top:532px;color:#000;line-height:13px;height:13px;">现浇细砂碎石粒径<span class="mw" style="width:12px"><span class="m" style="font-size:12.5px;transform:scaleX(0.8000)">40</span></span></div>
<div class="t" style="left:293px;top:544px;color:#000;line-height:13px;height:13px;">现浇细砂砾石粒径<span class="mw" style="width:12px"><span class="m" style="font-size:12.5px;transform:scaleX(0.8000)">10</span></span></div>
<div class="a" style="left:416px;top:412px;width:14px;height:144px;background:#D4D0C8;background-image:repeating-conic-gradient(#D4D0C8 0 25%,#F6F5F2 0 50%);background-size:2px 2px"></div>
<div class="a rz2" style="left:416px;top:412px;width:14px;height:15px;background:#D4D0C8"></div>
<svg style="left:420px;top:418px" width="7" height="4" viewBox="0 0 7 4"><path d="M0 4h7l-3.5-4z" fill="#000"/></svg>
<div class="a rz2" style="left:416px;top:427px;width:14px;height:54px;background:#D4D0C8"></div>
<div class="a rz2" style="left:416px;top:541px;width:14px;height:15px;background:#D4D0C8"></div>
<svg style="left:420px;top:546px" width="7" height="4" viewBox="0 0 7 4"><path d="M0 0h7l-3.5 4z" fill="#000"/></svg>
</body></html>
